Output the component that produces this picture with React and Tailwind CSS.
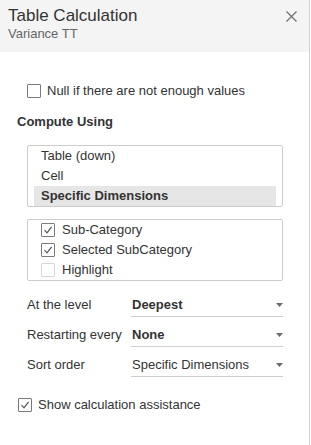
const font = { fontFamily: '"Liberation Sans", Arial, sans-serif' }

function Box({ checked, light }) {
	return (
		<span
			className={
				'flex items-center justify-center w-[14px] h-[14px] shrink-0 rounded-[1px] border bg-white ' +
				(light ? 'border-[#d6d6d6]' : 'border-[#7a7a7a]')
			}
		>
			{checked && (
				<svg width="10" height="10" viewBox="0 0 10 10">
					<path d="M1.5 5.2 L4 7.8 L8.6 1.8" fill="none" stroke="#555" strokeWidth="1.2" />
				</svg>
			)}
		</span>
	)
}

function Arrow() {
	return (
		<svg width="7" height="4" viewBox="0 0 7 4" className="shrink-0">
			<path d="M0 0 H7 L3.5 4 Z" fill="#6b6b6b" />
		</svg>
	)
}

function CloseIcon() {
	return (
		<svg width="11" height="11" viewBox="0 0 11 11" className="mt-[6px] shrink-0">
			<path d="M0.5 0.5 L10.5 10.5 M10.5 0.5 L0.5 10.5" stroke="#6e6e6e" strokeWidth="1.2" />
		</svg>
	)
}

function DropRow({ label, value, bold }) {
	return (
		<div className="flex pl-[27px] leading-[19px]">
			<div className="w-[104px] pt-[8px] pb-[3px]">{label}</div>
			<div className="w-[152px] pt-[8px] pb-[2px] pl-[1px] border-b border-[#cfcfcf] flex items-center justify-between">
				<span className={bold ? 'font-bold' : ''}>{value}</span>
				<Arrow />
			</div>
		</div>
	)
}

export default function App() {
	return (
		<div className="w-[311px] h-[445px] bg-white overflow-hidden" style={font}>
			<div className="w-[310px] h-full border-r border-[#d2d2d2] text-[13px] text-[#333]">
				{/* header */}
				<div className="h-[52px] bg-[#f4f4f4] flex justify-between pl-2 pr-3 pt-[5px]">
					<div>
						<div className="text-[17px] leading-[21px] text-[#333]">Table Calculation</div>
						<div className="text-[13px] leading-[16px] text-[#666]">Variance TT</div>
					</div>
					<CloseIcon />
				</div>

				<div className="mt-[29px] pl-[27px] flex items-center gap-[6px] leading-[20px]">
					<Box />
					<span>Null if there are not enough values</span>
				</div>

				<div className="mt-[11px] pl-[17px] font-bold leading-[20px]">Compute Using</div>

				<div className="mt-[13px] ml-[27px] w-[256px] h-[62px] border border-[#cccccc] rounded-[2px] px-[6px] leading-[20px]">
					<div className="px-[7px]">Table (down)</div>
					<div className="px-[7px]">Cell</div>
					<div className="px-[7px] bg-[#e6e6e6] font-bold">Specific Dimensions</div>
				</div>

				<div className="mt-[12px] ml-[27px] w-[256px] h-[62px] border border-[#cccccc] rounded-[2px] overflow-hidden leading-[20px]">
					{[
						['Sub-Category', true],
						['Selected SubCategory', true],
						['Highlight', false],
					].map(([t, c]) => (
						<div key={t} className="flex items-center gap-[7px] pl-[13px]">
							<Box checked={c} light={!c} />
							<span>{t}</span>
						</div>
					))}
				</div>

				<div className="mt-[6px]">
					<DropRow label="At the level" value="Deepest" bold />
					<DropRow label="Restarting every" value="None" bold />
					<DropRow label="Sort order" value="Specific Dimensions" />
				</div>

				<div className="mt-[18px] pl-[18px] flex items-center gap-[6px] leading-[20px]">
					<Box checked />
					<span>Show calculation assistance</span>
				</div>
			</div>
		</div>
	)
}
